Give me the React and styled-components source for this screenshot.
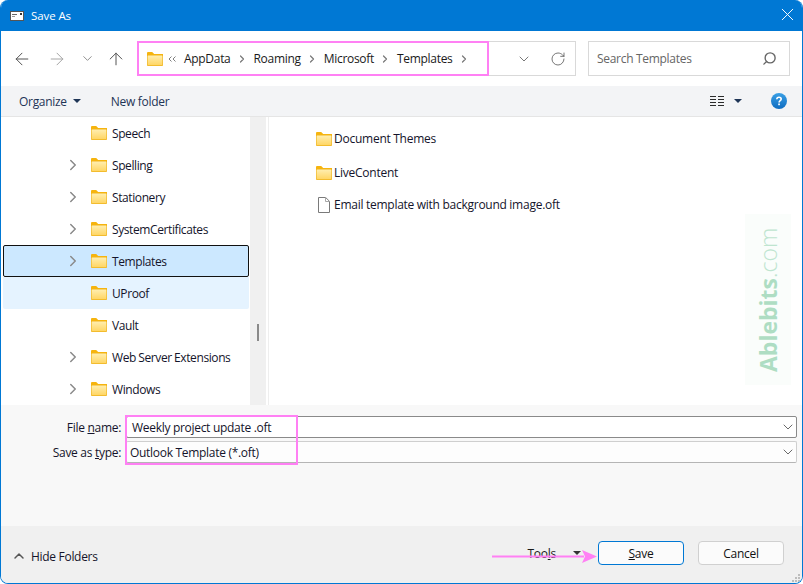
import React from "react";
import styled, { createGlobalStyle } from "styled-components";
import { ArrowLeft, ArrowRight, ArrowUp, ChevronDown, ChevronRight, ChevronUp, RotateCw, Search, X } from "lucide-react";

const treeRows = [
    { name: "Speech", arrow: false },
    { name: "Spelling", arrow: true },
    { name: "Stationery", arrow: true },
    { name: "SystemCertificates", arrow: true },
    { name: "Templates", arrow: true, state: "selected" },
    { name: "UProof", arrow: false, state: "hover" },
    { name: "Vault", arrow: false },
    { name: "Web Server Extensions", arrow: true },
    { name: "Windows", arrow: true },
];

const crumbs = ["AppData", "Roaming", "Microsoft", "Templates"];

const FolderIcon = ({ size = 16 }) => (
    <svg width={size} height={Math.round(size * 0.875)} viewBox="0 0 16 14">
        <defs>
            <linearGradient id="folderBody" x1="0" y1="0" x2="0" y2="1">
                <stop offset="0" stopColor="#ffeeb0" />
                <stop offset="1" stopColor="#ffd664" />
            </linearGradient>
        </defs>
        <path d="M0 1.2C0 .5.5 0 1.2 0h4l2 2H16v2H0z" fill="#f6b40e" />
        <rect x="0" y="3" width="16" height="11" rx="1" fill="#efb31c" />
        <rect x="0.6" y="3.4" width="14.8" height="9.8" rx=".6" fill="url(#folderBody)" />
    </svg>
);

const FileIcon = () => (
    <svg width="12" height="16" viewBox="0 0 12 16">
        <path d="M.5.5h7.2l3.8 3.8v11.2H.5z" fill="#fff" stroke="#7a7a7a" />
        <path d="M7.5.5v4h4" fill="none" stroke="#a8a8a8" />
    </svg>
);

const MailIcon = () => (
    <svg width="14" height="10" viewBox="0 0 14 10">
        <rect width="14" height="10" fill="#fff" />
        <rect x=".5" y=".5" width="13" height="9" fill="none" stroke="#555" />
        <rect x="2" y="3" width="5" height="1" fill="#666" />
        <rect x="2" y="5" width="3" height="1" fill="#999" />
        <rect x="10" y="2" width="2" height="2" fill="#333" />
    </svg>
);

const DoubleChevron = () => (
    <svg width="8" height="6" viewBox="0 0 8 6">
        <path d="M3.5.5L1 3l2.5 2.5M7.5.5L5 3l2.5 2.5" fill="none" stroke="#808080" />
    </svg>
);

const DetailsIcon = () => (
    <svg width="14" height="12" viewBox="0 0 14 12">
        <path d="M0 1.5h6M8 1.5h6M0 4.5h6M8 4.5h6M0 7.5h6M8 7.5h6M0 10.5h6M8 10.5h6" stroke="#2b2b2b" />
    </svg>
);

const Caret = ({ color = "#1f3556" }) => (
    <svg width="8" height="4" viewBox="0 0 8 4">
        <path d="M0 0h8L4 4z" fill={color} />
    </svg>
);

const HelpIcon = () => (
    <svg width="16" height="16" viewBox="0 0 16 16">
        <defs>
            <linearGradient id="helpBlue" x1="0" y1="0" x2="0" y2="1">
                <stop offset="0" stopColor="#3aa0e6" />
                <stop offset="1" stopColor="#0f6cc0" />
            </linearGradient>
        </defs>
        <circle cx="8" cy="8" r="8" fill="url(#helpBlue)" />
        <path d="M5.8 6.2C5.9 4.9 6.8 4.2 8 4.2s2.2.7 2.2 1.9c0 1.6-2.1 1.6-2.1 3.3" fill="none" stroke="#fff" strokeWidth="1.6" />
        <rect x="7.2" y="10.5" width="1.7" height="1.7" fill="#fff" />
    </svg>
);

const Grip = () => (
    <svg width="10" height="10" viewBox="0 0 10 10">
        <path d="M7 1h2v2H7zM4 4h2v2H4zM7 4h2v2H7zM1 7h2v2H1zM4 7h2v2H4zM7 7h2v2H7z" fill="#bdbdbd" />
    </svg>
);

const App = () => {
    return (
        <>
            <GlobalStyle />
            <Win>
                <TitleBar>
                    <MailIcon />
                    <TitleText>Save As</TitleText>
                    <CloseBtn><X size={21} strokeWidth={1.1} color="#fff" /></CloseBtn>
                </TitleBar>

                <AddressRow>
                    <NavBtn><ArrowLeft size={20} strokeWidth={1.2} color="#555" /></NavBtn>
                    <NavBtn><ArrowRight size={20} strokeWidth={1.2} color="#a6a6a6" /></NavBtn>
                    <NavSmall><ChevronDown size={15} strokeWidth={1.3} color="#777" /></NavSmall>
                    <NavUp><ArrowUp size={20} strokeWidth={1.2} color="#555" /></NavUp>
                    <AddressBox>
                        <FolderIcon />
                        <Chevrons><DoubleChevron /></Chevrons>
                        {crumbs.map((c) => (
                            <React.Fragment key={c}>
                                <Crumb>{c}</Crumb>
                                <CrumbSep><ChevronRight size={12} strokeWidth={2.4} color="#777" /></CrumbSep>
                            </React.Fragment>
                        ))}
                        <AddressEnd>
                            <ChevronDown size={16} strokeWidth={1.2} color="#555" />
                            <RotateCw size={16} strokeWidth={1.2} color="#555" />
                        </AddressEnd>
                        <PinkBox $w={352} $h={35} $l={-1} $t={-1} />
                    </AddressBox>
                    <SearchBox>
                        <SearchText>Search Templates</SearchText>
                        <Search size={15} strokeWidth={2.2} color="#666" style={{ transform: "scaleX(-1)" }} />
                    </SearchBox>
                </AddressRow>

                <Toolbar>
                    <ToolLabel>Organize</ToolLabel>
                    <Caret />
                    <NewFolder>New folder</NewFolder>
                    <ToolRight>
                        <DetailsIcon />
                        <Caret />
                        <HelpSlot><HelpIcon /></HelpSlot>
                    </ToolRight>
                </Toolbar>

                <Body>
                    <Tree>
                        {treeRows.map((r) => (
                            <TreeRow key={r.name} $state={r.state}>
                                <ArrowSlot>
                                    {r.arrow && <ChevronRight size={18} strokeWidth={2} color="#8a8a8a" />}
                                </ArrowSlot>
                                <FolderIcon />
                                <RowText>{r.name}</RowText>
                            </TreeRow>
                        ))}
                    </Tree>
                    <ScrollTrack><ScrollThumb /></ScrollTrack>
                    <Files>
                        <FileRow $top={13}><FolderIcon /><FileName>Document Themes</FileName></FileRow>
                        <FileRow $top={17}><FolderIcon /><FileName>LiveContent</FileName></FileRow>
                        <FileRow $top={15}><FileSlot><FileIcon /></FileSlot><FileName>Email template with background image.oft</FileName></FileRow>
                        <Watermark><b>Ablebits</b>.com</Watermark>
                    </Files>
                </Body>

                <FormArea>
                    <FormRow>
                        <FieldLabel>File <u>n</u>ame:</FieldLabel>
                        <NameInput>
                            Weekly project update .oft
                            <ComboArrow><ChevronDown size={16} strokeWidth={1.2} color="#444" /></ComboArrow>
                        </NameInput>
                    </FormRow>
                    <FormRow>
                        <FieldLabel>Save as <u>t</u>ype:</FieldLabel>
                        <TypeSelect>
                            Outlook Template (*.oft)
                            <ComboArrow><ChevronDown size={16} strokeWidth={1.2} color="#444" /></ComboArrow>
                        </TypeSelect>
                    </FormRow>
                    <PinkBox $w={173} $h={50} $l={124} $t={10} />
                </FormArea>

                <Footer>
                    <HideFolders>
                        <ChevronUp size={16} strokeWidth={2.2} color="#555" />
                        <span>Hide Folders</span>
                    </HideFolders>
                    <FooterRight>
                        <ToolsLabel>Too<u>l</u>s</ToolsLabel>
                        <Caret color="#333" />
                        <DialogBtn $primary><u>S</u>ave</DialogBtn>
                        <DialogBtn>Cancel</DialogBtn>
                    </FooterRight>
                    <PinkArrow width="106" height="18" viewBox="0 0 106 18">
                        <path d="M0 9.5h92" stroke="#ff80f4" strokeWidth="2" />
                        <path d="M90 3l15 6.5L90 16l3-6.5z" fill="#ff80f4" />
                    </PinkArrow>
                    <GripSlot><Grip /></GripSlot>
                </Footer>
            </Win>
        </>
    );
};
export default App;

const GlobalStyle = createGlobalStyle`
  html, body {
    margin: 0;
    padding: 0;
    background: #fff;
  }
  body {
    font-family: "Open Sans", "Liberation Sans", sans-serif;
    font-size: 12px;
    color: #1a1a1a;
  }
  svg {
    flex: none;
  }
`;

const Win = styled.div`
    width: 803px;
    height: 584px;
    box-sizing: border-box;
    border: 1px solid #0078d4;
    border-top: none;
    border-radius: 8px;
    overflow: hidden;
    display: flex;
    flex-direction: column;
    background: #fff;
`;

const TitleBar = styled.div`
    height: 31px;
    background: #0078d4;
    display: flex;
    align-items: center;
    padding: 0 0 0 9px;
    color: #fff;
    flex: none;
`;

const TitleText = styled.span`
    margin-left: 7px;
    font-size: 11.5px;
    letter-spacing: -0.1px;
`;

const CloseBtn = styled.div`
    margin-left: auto;
    width: 28px;
    display: flex;
    justify-content: center;
    margin-right: 1px;
    margin-top: -2px;
`;

const AddressRow = styled.div`
    height: 55px;
    display: flex;
    align-items: center;
    flex: none;
    padding: 0 12px 0 13px;
    background: #fff;
`;

const NavBtn = styled.div`
    width: 16px;
    margin-right: 19px;
    display: flex;
    justify-content: center;
`;

const NavUp = styled(NavBtn)`
    margin-right: 13px;
`;

const NavSmall = styled.div`
    width: 16px;
    margin: 0 13px 0 -5px;
    display: flex;
    justify-content: center;
`;

const AddressBox = styled.div`
    position: relative;
    flex: none;
    width: 439px;
    height: 35px;
    box-sizing: border-box;
    border: 1px solid #d9d9d9;
    display: flex;
    align-items: center;
    padding-left: 9px;
`;

const Chevrons = styled.span`
    width: 8px;
    margin-left: 5px;
    display: flex;
`;

const Crumb = styled.span`
    margin-left: 8px;
    letter-spacing: -0.3px;
    color: #1a1a1a;
    & ~ & {
        margin-left: 0;
    }
`;

const CrumbSep = styled.span`
    display: flex;
    margin: 0 4px 0 3px;
    width: 16px;
    justify-content: center;
`;

const AddressEnd = styled.div`
    position: absolute;
    right: 9px;
    top: 0;
    bottom: 0;
    display: flex;
    align-items: center;
    gap: 18px;
`;

const PinkBox = styled.div`
    position: absolute;
    left: ${(p) => p.$l}px;
    top: ${(p) => p.$t}px;
    width: ${(p) => p.$w}px;
    height: ${(p) => p.$h}px;
    box-sizing: border-box;
    border: 2px solid #ff80f4;
    pointer-events: none;
`;

const SearchBox = styled.div`
    margin-left: 12px;
    flex: none;
    width: 202px;
    height: 35px;
    box-sizing: border-box;
    border: 1px solid #d9d9d9;
    display: flex;
    align-items: center;
    justify-content: space-between;
    padding: 0 12px 0 8px;
`;

const SearchText = styled.span`
    color: #666;
    letter-spacing: -0.3px;
`;

const Toolbar = styled.div`
    height: 31px;
    box-sizing: border-box;
    flex: none;
    background: #f3f4f6;
    border-bottom: 1px solid #e5e5e5;
    display: flex;
    align-items: center;
    padding-left: 18px;
    gap: 6px;
    color: #1f3556;
`;

const ToolLabel = styled.span`
    letter-spacing: -0.3px;
`;

const NewFolder = styled.span`
    margin-left: 24px;
    letter-spacing: -0.3px;
`;

const ToolRight = styled.div`
    margin-left: auto;
    display: flex;
    align-items: center;
    gap: 10px;
    padding-right: 15px;
`;

const HelpSlot = styled.div`
    display: flex;
    margin-left: 19px;
`;

const Body = styled.div`
    height: 288px;
    flex: none;
    display: flex;
    background: #fff;
    overflow: hidden;
`;

const Tree = styled.div`
    width: 249px;
    flex: none;
    box-sizing: border-box;
    padding: 0 1px 0 2px;
`;

const TreeRow = styled.div`
    height: 32px;
    box-sizing: border-box;
    display: flex;
    align-items: center;
    padding-left: 61px;
    ${(p) => p.$state === "selected" && `
        background: #cce8ff;
        border: 1px solid #111;
        border-radius: 2px;
        padding-left: 60px;
    `}
    ${(p) => p.$state === "hover" && `
        background: #e5f3ff;
        border-radius: 0 0 2px 2px;
    `}
`;

const ArrowSlot = styled.span`
    width: 18px;
    height: 18px;
    display: flex;
    margin-right: 9px;
`;

const RowText = styled.span`
    margin-left: 5px;
    letter-spacing: -0.4px;
    word-spacing: -0.4px;
    color: #14142b;
`;

const ScrollTrack = styled.div`
    width: 16px;
    background: #f0f0f0;
    flex: none;
    position: relative;
    margin-right: 2px;
`;

const ScrollThumb = styled.div`
    position: absolute;
    left: 7px;
    top: 207px;
    width: 2px;
    height: 17px;
    background: #8a8a8a;
`;

const Files = styled.div`
    flex: 1;
    border-left: 1px solid #eeeeee;
    position: relative;
    padding-left: 47px;
`;

const FileRow = styled.div`
    display: flex;
    align-items: center;
    margin-top: ${(p) => p.$top}px;
    height: 17px;
`;

const FileSlot = styled.span`
    width: 16px;
    display: flex;
    justify-content: center;
`;

const FileName = styled.span`
    margin-left: 2px;
    letter-spacing: -0.25px;
    word-spacing: -0.2px;
    color: #14142b;
`;

const Watermark = styled.div`
    position: absolute;
    right: 11px;
    top: 97px;
    width: 46px;
    height: 171px;
    background: #fafdfb;
    writing-mode: vertical-rl;
    transform: rotate(180deg);
    display: flex;
    align-items: center;
    justify-content: center;
    font-size: 23px;
    font-weight: 300;
    color: #bfe5d0;
    b {
        font-weight: 700;
        color: #aeddc3;
    }
`;

const FormArea = styled.div`
    position: relative;
    height: 121px;
    flex: none;
    background: #f8f8f8;
    box-sizing: border-box;
    padding: 11px 5px 0 0;
    display: flex;
    flex-direction: column;
    gap: 3px;
`;

const FormRow = styled.div`
    display: flex;
    align-items: center;
    height: 22px;
`;

const FieldLabel = styled.label`
    width: 120px;
    text-align: right;
    margin-right: 5px;
    letter-spacing: -0.3px;
    color: #14142b;
`;

const NameInput = styled.div`
    position: relative;
    flex: 1;
    height: 22px;
    box-sizing: border-box;
    background: #fff;
    border: 1px solid #8a8a8a;
    border-radius: 2px;
    display: flex;
    align-items: center;
    padding-left: 5px;
    letter-spacing: -0.3px;
    color: #14142b;
`;

const TypeSelect = styled(NameInput)`
    background: #fdfdfd;
    border-color: #cfcfcf;
    border-bottom-color: #b5b5b5;
    padding-left: 3px;
`;

const ComboArrow = styled.span`
    position: absolute;
    right: 0;
    top: 2px;
    display: flex;
`;

const Footer = styled.div`
    position: relative;
    flex: 1;
    background: #f0f0f0;
    display: flex;
    align-items: center;
    padding-left: 10px;
`;

const HideFolders = styled.div`
    display: flex;
    align-items: center;
    gap: 4px;
    margin-top: 3px;
    letter-spacing: -0.3px;
    color: #14142b;
`;

const FooterRight = styled.div`
    margin-left: auto;
    margin-top: -3px;
    display: flex;
    align-items: center;
    padding-right: 18px;
`;

const ToolsLabel = styled.span`
    letter-spacing: -0.25px;
    margin-right: 17px;
`;

const DialogBtn = styled.div`
    width: 86px;
    height: 24px;
    box-sizing: border-box;
    background: #fbfbfb;
    border-radius: 4px;
    border: 1px solid ${(p) => (p.$primary ? "#0078d4" : "#d0d0d0")};
    margin-left: ${(p) => (p.$primary ? "17px" : "14px")};
    display: flex;
    align-items: center;
    justify-content: center;
    white-space: pre;
    color: #111;
    letter-spacing: -0.25px;
`;

const PinkArrow = styled.svg`
    position: absolute;
    left: 491px;
    top: 21px;
`;

const GripSlot = styled.div`
    position: absolute;
    right: 1px;
    bottom: 0;
    display: flex;
`;
